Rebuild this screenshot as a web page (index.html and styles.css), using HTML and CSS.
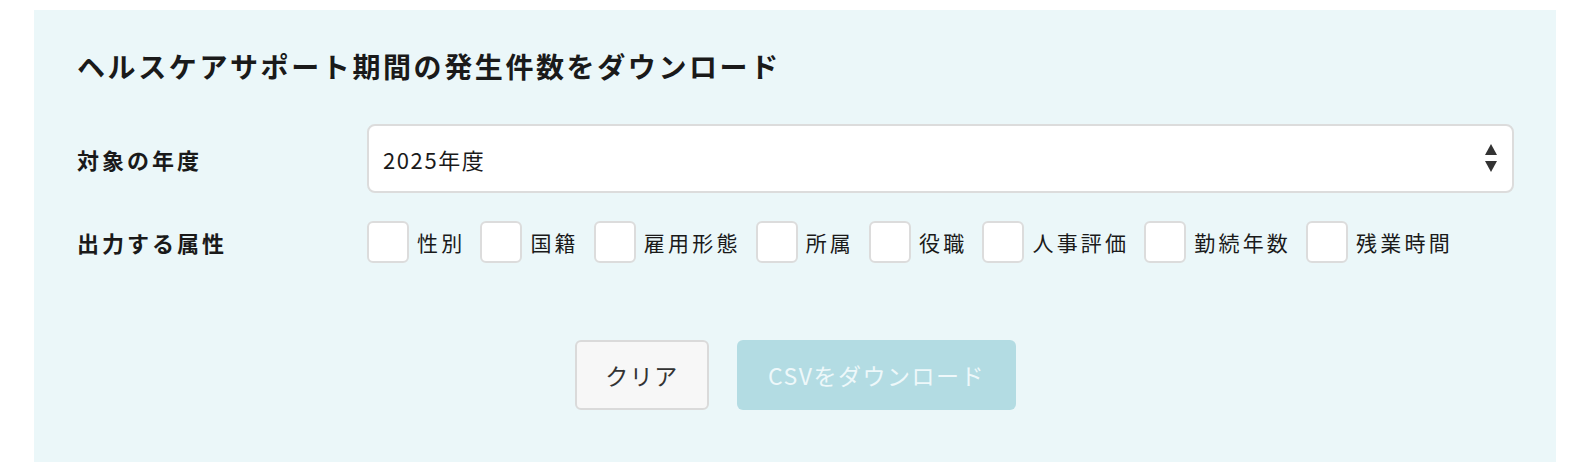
FILE: index.html
```html
<!DOCTYPE html>
<html lang="ja">

<head>
    <meta charset="UTF-8">
    <meta name="viewport" content="width=device-width, initial-scale=1.0">
    <title>発生件数ダウンロード</title>
    <link rel="stylesheet" href="styles.css">
</head>

<body>

    <div class="panel">
        <h2 class="panel-title">ヘルスケアサポート期間の発生件数をダウンロード</h2>

        <form class="dl-form" onsubmit="return false">
            <div class="form-row">
                <label class="form-label" for="year">対象の年度</label>
                <div class="select-wrap">
                    <select id="year" class="year-select">
                        <option>2025年度</option>
                        <option>2024年度</option>
                        <option>2023年度</option>
                    </select>
                    <svg class="select-arrows" width="14" height="30" viewBox="0 0 14 30">
                        <path d="M7 1 L13 12 L1 12 Z" fill="#333" />
                        <path d="M1 18 L13 18 L7 29 Z" fill="#333" />
                    </svg>
                </div>
            </div>

            <div class="form-row">
                <span class="form-label">出力する属性</span>
                <div class="attr-list">
                    <label class="attr"><input type="checkbox"><span>性別</span></label>
                    <label class="attr"><input type="checkbox"><span>国籍</span></label>
                    <label class="attr"><input type="checkbox"><span>雇用形態</span></label>
                    <label class="attr"><input type="checkbox"><span>所属</span></label>
                    <label class="attr"><input type="checkbox"><span>役職</span></label>
                    <label class="attr"><input type="checkbox"><span>人事評価</span></label>
                    <label class="attr"><input type="checkbox"><span>勤続年数</span></label>
                    <label class="attr"><input type="checkbox"><span>残業時間</span></label>
                </div>
            </div>

            <div class="btn-row">
                <button type="reset" class="btn btn-clear">クリア</button>
                <button type="submit" class="btn btn-csv" disabled>CSVをダウンロード</button>
            </div>
        </form>
    </div>

</body>

</html>
```

FILE: styles.css
```css
body {
    margin: 0;
    background-color: #fff;
    font-family: "Noto Sans CJK JP", "Noto Sans", sans-serif;
    color: #1a1a1a;
}

.panel {
    margin: 10px 16px 0 34px;
    background-color: #ebf7f9;
    padding: 36px 42px 60px 43px;
    min-height: 356px;
}

.panel-title {
    margin: 0 0 38px;
    font-size: 28px;
    line-height: 40px;
    letter-spacing: 2.6px;
    font-weight: bold;
}

.form-row {
    display: flex;
    align-items: center;
    margin-bottom: 28px;
}

.form-label {
    width: 290px;
    flex-shrink: 0;
    font-size: 22px;
    letter-spacing: 3px;
    font-weight: bold;
}

.select-wrap {
    position: relative;
    flex: 1;
}

.year-select {
    appearance: none;
    width: 100%;
    height: 69px;
    padding: 0 50px 0 14px;
    background-color: #fff;
    border: 2px solid #dcdcdc;
    border-radius: 8px;
    font-family: inherit;
    font-size: 22px;
    letter-spacing: 1.6px;
    color: #1a1a1a;
}

.select-arrows {
    position: absolute;
    right: 16px;
    top: 19px;
    pointer-events: none;
}

.attr-list {
    display: flex;
    align-items: center;
    gap: 15px;
}

    .attr-list .attr {
        display: flex;
        align-items: center;
        gap: 8px;
        font-size: 21px;
        letter-spacing: 3.2px;
    }

    .attr-list input[type="checkbox"] {
        appearance: none;
        margin: 0;
        width: 42px;
        height: 42px;
        background-color: #fff;
        border: 2px solid #dcdcdc;
        border-radius: 6px;
    }

.btn-row {
    display: flex;
    justify-content: center;
    gap: 28px;
    margin-top: 77px;
}

.btn {
    height: 70px;
    border-radius: 6px;
    font-family: inherit;
    font-size: 23px;
    letter-spacing: 1.5px;
    cursor: pointer;
}

.btn-clear {
    width: 134px;
    background-color: #f7f7f7;
    border: 2px solid #dadada;
    color: #333;
}

.btn-csv {
    width: 279px;
    background-color: #b3dce3;
    border: none;
    color: #eef8fa;
}
```
